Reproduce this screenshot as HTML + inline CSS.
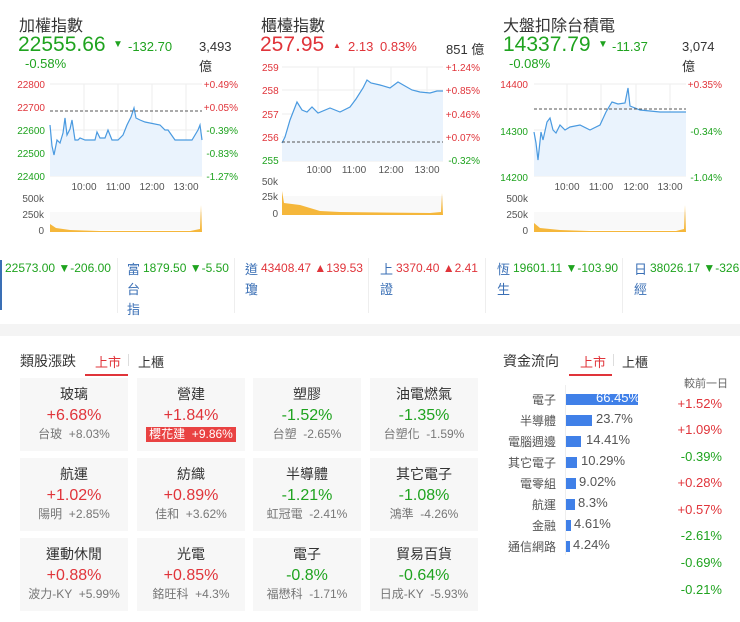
<!DOCTYPE html>
<html><head><meta charset="utf-8"><style>
body{margin:0;width:740px;height:622px;background:#f4f4f4;font-family:"Liberation Sans","Noto Sans CJK TC",sans-serif;position:relative;overflow:hidden}
.a{position:absolute;white-space:nowrap}
.card{position:absolute;background:#fff}
.r{color:#e0343a}.g{color:#1fa31f}.k{color:#333}.b{color:#3a6fb5}
.cell{position:absolute;width:108px;height:73px;background:#f7f7f7;text-align:center}
.cell .n{font-size:14px;color:#333;margin-top:8px;line-height:17px}
.cell .p{font-size:16px;margin-top:3px;line-height:19px}
.cell .s{font-size:12px;color:#777;margin-top:2px;line-height:15px}
.tag{display:inline-block;background:#e94242;color:#fff;padding:0 3px}
.fl{position:absolute;font-size:12px;color:#555;text-align:right;width:60px;left:496px}
.bar{position:absolute;height:11px;background:#4080e8;left:566px}
.bv{position:absolute;font-size:13px;color:#555}
.rp{position:absolute;font-size:13px;width:60px;text-align:right;left:662px}
.t{font-size:16px}.big{font-size:21px}
.tk{font-size:12px}
</style></head><body>
<div class="card" style="left:0;top:0;width:740px;height:324px"></div>
<div class="card" style="left:0;top:336px;width:740px;height:286px"></div>

<div class="a k t" style="left:19px;top:12px">加權指數</div>
<div class="a g big" style="left:18px;top:33px">22555.66</div>
<div class="a g" style="left:113px;top:39px;font-size:10px">▼</div>
<div class="a g" style="left:128px;top:39px;font-size:13px">-132.70</div>
<div class="a k" style="left:199px;top:39px;font-size:13px">3,493</div>
<div class="a k" style="left:199px;top:56px;font-size:13px">億</div>
<div class="a g" style="left:25px;top:56px;font-size:13px">-0.58%</div>

<div class="a k t" style="left:261px;top:12px">櫃檯指數</div>
<div class="a r big" style="left:260px;top:33px">257.95</div>
<div class="a r" style="left:333px;top:41px;font-size:8px">▲</div>
<div class="a r" style="left:348px;top:39px;font-size:13px">2.13</div>
<div class="a r" style="left:380px;top:39px;font-size:13px">0.83%</div>
<div class="a k" style="left:446px;top:39px;font-size:13px">851 億</div>

<div class="a k t" style="left:503px;top:12px">大盤扣除台積電</div>
<div class="a g big" style="left:503px;top:33px">14337.79</div>
<div class="a g" style="left:598px;top:39px;font-size:10px">▼</div>
<div class="a g" style="left:612px;top:39px;font-size:13px">-11.37</div>
<div class="a k" style="left:682px;top:39px;font-size:13px">3,074</div>
<div class="a k" style="left:682px;top:56px;font-size:13px">億</div>
<div class="a g" style="left:509px;top:56px;font-size:13px">-0.08%</div>

<svg class="a" style="left:0;top:0" width="740" height="240" font-family="Liberation Sans" font-size="10">
<g stroke="#eee" stroke-width="1">
<line x1="50" y1="84" x2="202" y2="84"/><line x1="50" y1="130" x2="202" y2="130"/><line x1="50" y1="153" x2="202" y2="153"/><line x1="50" y1="176" x2="202" y2="176"/>
<line x1="84" y1="84" x2="84" y2="176"/><line x1="118" y1="84" x2="118" y2="176"/><line x1="152" y1="84" x2="152" y2="176"/><line x1="186" y1="84" x2="186" y2="176"/>
<line x1="282" y1="67" x2="443" y2="67"/><line x1="282" y1="90" x2="443" y2="90"/><line x1="282" y1="114" x2="443" y2="114"/><line x1="282" y1="137" x2="443" y2="137"/><line x1="282" y1="161" x2="443" y2="161"/>
<line x1="318" y1="67" x2="318" y2="161"/><line x1="354" y1="67" x2="354" y2="161"/><line x1="391" y1="67" x2="391" y2="161"/><line x1="427" y1="67" x2="427" y2="161"/>
<line x1="534" y1="84" x2="686" y2="84"/><line x1="534" y1="130" x2="686" y2="130"/><line x1="534" y1="176" x2="686" y2="176"/>
<line x1="567" y1="84" x2="567" y2="176"/><line x1="601" y1="84" x2="601" y2="176"/><line x1="636" y1="84" x2="636" y2="176"/><line x1="670" y1="84" x2="670" y2="176"/>
</g>
<polygon fill="#eaf3fd" points="50,125 52,146 54,155 57,140 60,143 63,133 65,118 67,135 70,129 72,120 75,140 78,140 80,138 85,140 95,140 97,132 100,138 105,138 108,130 112,140 118,140 123,135 127,125 131,117 134,108 136,118 140,120 145,122 160,125 165,130 168,130 175,140 192,140 198,130 200,125 202,140 202,176 50,176"/>
<polyline fill="none" stroke="#4a9ae0" stroke-width="1.2" points="50,125 52,146 54,155 57,140 60,143 63,133 65,118 67,135 70,129 72,120 75,140 78,140 80,138 85,140 95,140 97,132 100,138 105,138 108,130 112,140 118,140 123,135 127,125 131,117 134,108 136,118 140,120 145,122 160,125 165,130 168,130 175,140 192,140 198,130 200,125 202,140"/>
<line x1="50" y1="111" x2="202" y2="111" stroke="#555" stroke-dasharray="3,2"/>
<polygon fill="#eaf3fd" points="282,143 285,137 290,120 297,102 302,110 307,112 312,107 318,113 330,108 340,112 350,107 356,99 363,88 367,80 371,83 380,85 390,88 398,82 405,86 412,90 420,92 430,93 437,91 443,91 443,161 282,161"/>
<polyline fill="none" stroke="#4a9ae0" stroke-width="1.2" points="282,143 285,137 290,120 297,102 302,110 307,112 312,107 318,113 330,108 340,112 350,107 356,99 363,88 367,80 371,83 380,85 390,88 398,82 405,86 412,90 420,92 430,93 437,91 443,91"/>
<line x1="282" y1="142" x2="443" y2="142" stroke="#555" stroke-dasharray="3,2"/>
<polygon fill="#eaf3fd" points="534,132 536,143 538,160 541,132 543,140 547,122 550,118 553,130 556,133 560,125 565,130 570,127 580,125 590,130 600,125 606,112 612,102 618,104 625,103 628,88 630,106 640,110 660,112 675,112 686,112 686,176 534,176"/>
<polyline fill="none" stroke="#4a9ae0" stroke-width="1.2" points="534,132 536,143 538,160 541,132 543,140 547,122 550,118 553,130 556,133 560,125 565,130 570,127 580,125 590,130 600,125 606,112 612,102 618,104 625,103 628,88 630,106 640,110 660,112 675,112 686,112"/>
<line x1="534" y1="109" x2="686" y2="109" stroke="#555" stroke-dasharray="3,2"/>
<g fill="#f9f9f9"><rect x="50" y="212" width="152" height="18"/><rect x="282" y="196" width="161" height="18"/><rect x="534" y="212" width="152" height="18"/></g>
<g fill="#f5b73b">
<polygon points="50,224 56,228 70,230 100,231 190,231 200,229 201,205 202,232 50,232"/>
<polygon points="282,191 284,203 300,205 310,208 320,211 340,212 430,213 441,212 442,193 443,215 282,215"/>
<polygon points="534,223 540,228 560,230 590,231 676,231 684,229 685,205 686,232 534,232"/>
</g>
<g text-anchor="end">
<text x="45" y="88" fill="#e0343a">22800</text><text x="45" y="111" fill="#e0343a">22700</text><text x="45" y="134" fill="#1fa31f">22600</text><text x="45" y="157" fill="#1fa31f">22500</text><text x="45" y="180" fill="#1fa31f">22400</text>
<text x="238" y="88" fill="#e0343a">+0.49%</text><text x="238" y="111" fill="#e0343a">+0.05%</text><text x="238" y="134" fill="#1fa31f">-0.39%</text><text x="238" y="157" fill="#1fa31f">-0.83%</text><text x="238" y="180" fill="#1fa31f">-1.27%</text>
<text x="44" y="202" fill="#555">500k</text><text x="44" y="218" fill="#555">250k</text><text x="44" y="234" fill="#555">0</text>
<text x="480" y="71" fill="#e0343a">+1.24%</text><text x="480" y="94" fill="#e0343a">+0.85%</text><text x="480" y="118" fill="#e0343a">+0.46%</text><text x="480" y="141" fill="#e0343a">+0.07%</text><text x="480" y="164" fill="#1fa31f">-0.32%</text>
<text x="278" y="185" fill="#555">50k</text><text x="278" y="200" fill="#555">25k</text><text x="278" y="217" fill="#555">0</text>
<text x="528" y="88" fill="#e0343a">14400</text><text x="528" y="135" fill="#1fa31f">14300</text><text x="528" y="181" fill="#1fa31f">14200</text>
<text x="722" y="88" fill="#e0343a">+0.35%</text><text x="722" y="135" fill="#1fa31f">-0.34%</text><text x="722" y="181" fill="#1fa31f">-1.04%</text>
<text x="528" y="202" fill="#555">500k</text><text x="528" y="218" fill="#555">250k</text><text x="528" y="234" fill="#555">0</text>
</g>
<text x="262" y="71" fill="#e0343a">259</text><text x="262" y="94" fill="#e0343a">258</text><text x="262" y="118" fill="#e0343a">257</text><text x="262" y="141" fill="#e0343a">256</text><text x="262" y="164" fill="#1fa31f">255</text>
<g fill="#555" text-anchor="middle">
<text x="84" y="190">10:00</text><text x="118" y="190">11:00</text><text x="152" y="190">12:00</text><text x="186" y="190">13:00</text>
<text x="319" y="173">10:00</text><text x="354" y="173">11:00</text><text x="391" y="173">12:00</text><text x="427" y="173">13:00</text>
<text x="567" y="190">10:00</text><text x="601" y="190">11:00</text><text x="636" y="190">12:00</text><text x="670" y="190">13:00</text>
</g>
<line x1="0" y1="251" x2="740" y2="251" stroke="#e8e8e8"/>
</svg>

<div class="a" style="left:0;top:260px;width:2px;height:50px;background:#3a6fb5"></div>
<div class="a g tk" style="left:5px;top:261px">22573.00 ▼-206.00</div>
<div class="a" style="left:117px;top:258px;width:1px;height:55px;background:#eee"></div>
<div class="a" style="left:234px;top:258px;width:1px;height:55px;background:#eee"></div>
<div class="a" style="left:368px;top:258px;width:1px;height:55px;background:#eee"></div>
<div class="a" style="left:485px;top:258px;width:1px;height:55px;background:#eee"></div>
<div class="a" style="left:622px;top:258px;width:1px;height:55px;background:#eee"></div>
<div class="a b" style="left:127px;top:260px;font-size:13px;line-height:20px;width:12px;white-space:normal">富台指</div>
<div class="a g tk" style="left:143px;top:261px">1879.50 ▼-5.50</div>
<div class="a b" style="left:245px;top:260px;font-size:13px;line-height:20px;width:13px;white-space:normal">道瓊</div>
<div class="a r tk" style="left:261px;top:261px">43408.47 ▲139.53</div>
<div class="a b" style="left:380px;top:260px;font-size:13px;line-height:20px;width:13px;white-space:normal">上證</div>
<div class="a r tk" style="left:396px;top:261px">3370.40 ▲2.41</div>
<div class="a b" style="left:497px;top:260px;font-size:13px;line-height:20px;width:13px;white-space:normal">恆生</div>
<div class="a g tk" style="left:513px;top:261px">19601.11 ▼-103.90</div>
<div class="a b" style="left:634px;top:260px;font-size:13px;line-height:20px;width:13px;white-space:normal">日經</div>
<div class="a g tk" style="left:650px;top:261px">38026.17 ▼-326.</div>

<div class="a k" style="left:20px;top:351px;font-size:14px">類股漲跌</div>
<div class="a r" style="left:95px;top:352px;font-size:13px">上市</div>
<div class="a" style="left:128px;top:354px;width:1px;height:12px;background:#ddd"></div>
<div class="a k" style="left:138px;top:352px;font-size:13px">上櫃</div>
<div class="a" style="left:85px;top:374px;width:43px;height:2px;background:#e0343a"></div>

<div class="cell" style="left:20px;top:378px"><div class="n">玻璃</div><div class="p r">+6.68%</div><div class="s">台玻 &nbsp;+8.03%</div></div>
<div class="cell" style="left:137px;top:378px"><div class="n">營建</div><div class="p r">+1.84%</div><div class="s"><span class="tag">櫻花建 &nbsp;+9.86%</span></div></div>
<div class="cell" style="left:253px;top:378px"><div class="n">塑膠</div><div class="p g">-1.52%</div><div class="s">台塑 &nbsp;-2.65%</div></div>
<div class="cell" style="left:370px;top:378px"><div class="n">油電燃氣</div><div class="p g">-1.35%</div><div class="s">台塑化 &nbsp;-1.59%</div></div>
<div class="cell" style="left:20px;top:458px"><div class="n">航運</div><div class="p r">+1.02%</div><div class="s">陽明 &nbsp;+2.85%</div></div>
<div class="cell" style="left:137px;top:458px"><div class="n">紡織</div><div class="p r">+0.89%</div><div class="s">佳和 &nbsp;+3.62%</div></div>
<div class="cell" style="left:253px;top:458px"><div class="n">半導體</div><div class="p g">-1.21%</div><div class="s">虹冠電 &nbsp;-2.41%</div></div>
<div class="cell" style="left:370px;top:458px"><div class="n">其它電子</div><div class="p g">-1.08%</div><div class="s">鴻準 &nbsp;-4.26%</div></div>
<div class="cell" style="left:20px;top:538px"><div class="n">運動休閒</div><div class="p r">+0.88%</div><div class="s">波力-KY &nbsp;+5.99%</div></div>
<div class="cell" style="left:137px;top:538px"><div class="n">光電</div><div class="p r">+0.85%</div><div class="s">銘旺科 &nbsp;+4.3%</div></div>
<div class="cell" style="left:253px;top:538px"><div class="n">電子</div><div class="p g">-0.8%</div><div class="s">福懋科 &nbsp;-1.71%</div></div>
<div class="cell" style="left:370px;top:538px"><div class="n">貿易百貨</div><div class="p g">-0.64%</div><div class="s">日成-KY &nbsp;-5.93%</div></div>

<div class="a k" style="left:503px;top:351px;font-size:14px">資金流向</div>
<div class="a r" style="left:580px;top:352px;font-size:13px">上市</div>
<div class="a" style="left:613px;top:354px;width:1px;height:12px;background:#ddd"></div>
<div class="a k" style="left:622px;top:352px;font-size:13px">上櫃</div>
<div class="a" style="left:569px;top:374px;width:43px;height:2px;background:#e0343a"></div>
<div class="a" style="left:684px;top:375px;font-size:11px;color:#666">較前一日</div>
<div class="a" style="left:565px;top:385px;width:1px;height:170px;background:#eee"></div>

<div class="fl" style="top:391px">電子</div><div class="bar" style="top:394px;width:72px"></div><div class="bv" style="left:596px;top:390px;color:#fff">66.45%</div>
<div class="fl" style="top:412px">半導體</div><div class="bar" style="top:415px;width:26px"></div><div class="bv" style="left:596px;top:411px">23.7%</div>
<div class="fl" style="top:433px">電腦週邊</div><div class="bar" style="top:436px;width:15px"></div><div class="bv" style="left:586px;top:432px">14.41%</div>
<div class="fl" style="top:454px">其它電子</div><div class="bar" style="top:457px;width:11px"></div><div class="bv" style="left:581px;top:453px">10.29%</div>
<div class="fl" style="top:475px">電零組</div><div class="bar" style="top:478px;width:10px"></div><div class="bv" style="left:579px;top:474px">9.02%</div>
<div class="fl" style="top:496px">航運</div><div class="bar" style="top:499px;width:9px"></div><div class="bv" style="left:578px;top:495px">8.3%</div>
<div class="fl" style="top:517px">金融</div><div class="bar" style="top:520px;width:5px"></div><div class="bv" style="left:574px;top:516px">4.61%</div>
<div class="fl" style="top:538px">通信網路</div><div class="bar" style="top:541px;width:4px"></div><div class="bv" style="left:573px;top:537px">4.24%</div>

<div class="rp r" style="top:396px">+1.52%</div>
<div class="rp r" style="top:422px">+1.09%</div>
<div class="rp g" style="top:449px">-0.39%</div>
<div class="rp r" style="top:475px">+0.28%</div>
<div class="rp r" style="top:502px">+0.57%</div>
<div class="rp g" style="top:528px">-2.61%</div>
<div class="rp g" style="top:555px">-0.69%</div>
<div class="rp g" style="top:582px">-0.21%</div>
</body></html>
